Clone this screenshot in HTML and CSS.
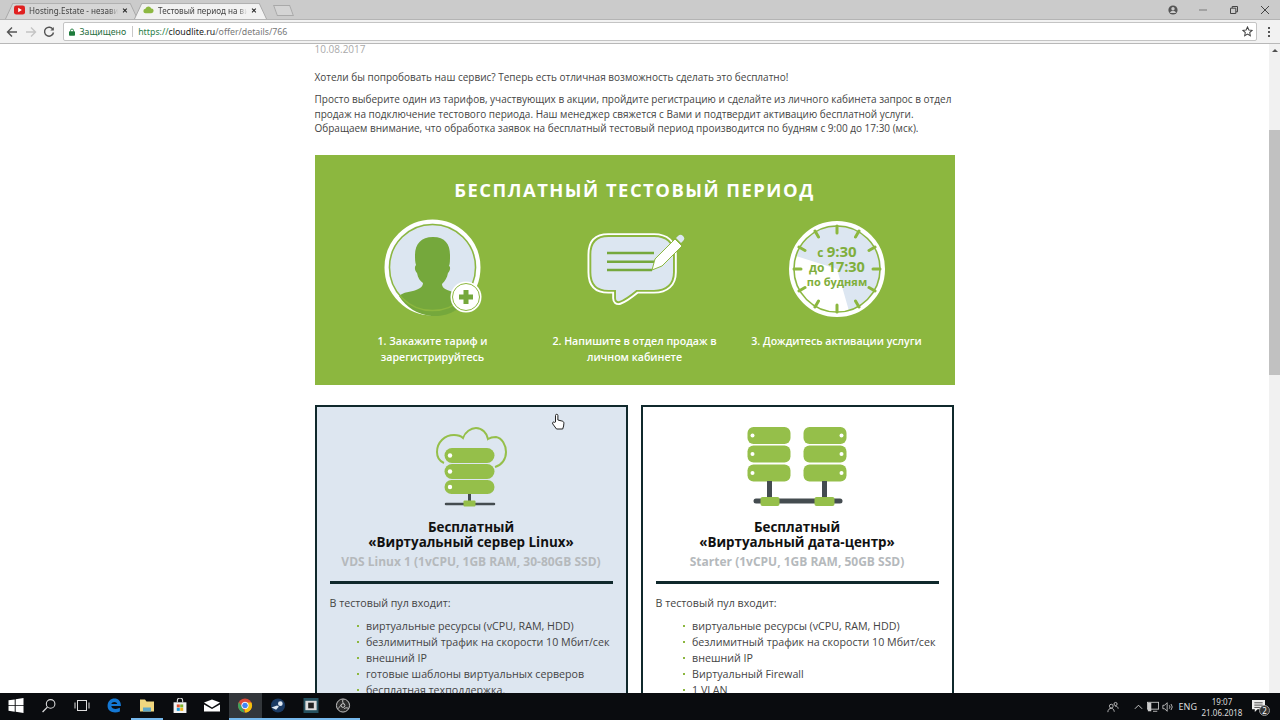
FILE: index.html
```html
<!DOCTYPE html>
<html lang="ru">
<head>
    <meta charset="UTF-8">
    <meta name="viewport" content="width=device-width, initial-scale=1.0">
    <title>Тестовый период на виртуальный сервер</title>
    <link rel="stylesheet" href="styles.css">
</head>
<body>
    <!-- Browser tab strip -->
    <div class="tabstrip">
        <div class="tab">
            <svg class="tab-icon" viewBox="0 0 12 10"><rect width="12" height="10" rx="2.5" fill="#e02020"/><path d="M4.6 2.6v4.8L8.6 5z" fill="#fff"/></svg>
            <span class="tab-title">Hosting.Estate - независ</span>
            <span class="tab-close">✕</span>
        </div>
        <div class="tab tab-active">
            <svg class="tab-icon" viewBox="0 0 12 10"><path d="M3 8.5a2.4 2.4 0 0 1-.4-4.8A3.4 3.4 0 0 1 9 3.3a2.6 2.6 0 0 1 0 5.2z" fill="#8db842"/></svg>
            <span class="tab-title">Тестовый период на вир</span>
            <span class="tab-close">✕</span>
        </div>
        <div class="tab-new"></div>
        <div class="window-controls">
            <svg class="win-user" viewBox="0 0 10 10"><circle cx="5" cy="5" r="4.6" fill="#555"/><circle cx="5" cy="3.8" r="1.7" fill="#ccc"/><path d="M1.8 8a3.4 3.4 0 0 1 6.4 0z" fill="#ccc"/></svg>
            <svg class="win-btn" viewBox="0 0 10 10"><path d="M1 5h8" stroke="#888" stroke-width="1.2"/></svg>
            <svg class="win-btn" viewBox="0 0 10 10"><path d="M1.5 3.2h5.3v5.3H1.5zM3.2 3V1.5h5.3v5.3H7" fill="none" stroke="#444" stroke-width="1"/></svg>
            <svg class="win-btn" viewBox="0 0 10 10"><path d="M1 1l8 8M9 1l-8 8" stroke="#444" stroke-width="1"/></svg>
        </div>
    </div>

    <!-- Address bar -->
    <div class="toolbar">
        <svg class="nav-icon" viewBox="0 0 12 12"><path d="M11 6H2M6 1.5L1.5 6 6 10.5" fill="none" stroke="#555" stroke-width="1.4"/></svg>
        <svg class="nav-icon" viewBox="0 0 12 12"><path d="M1 6h9M6 1.5L10.5 6 6 10.5" fill="none" stroke="#c4c4c4" stroke-width="1.4"/></svg>
        <svg class="nav-icon" viewBox="0 0 12 12"><path d="M10 3.5A4.5 4.5 0 1 0 10.5 6.5" fill="none" stroke="#555" stroke-width="1.4"/><path d="M10.8 1v3.4H7.4z" fill="#555"/></svg>
        <div class="omnibox">
            <svg class="lock" viewBox="0 0 8 10"><path d="M2 4.5V3a2 2 0 0 1 4 0v1.5" fill="none" stroke="#1e7b3c" stroke-width="1.2"/><rect y="4" width="8" height="6" rx="1" fill="#1e7b3c"/></svg>
            <span class="secure">Защищено</span>
            <span class="omni-sep"></span>
            <span class="url"><span class="url-https">https://</span><span class="url-host">cloudlite.ru</span>/offer/details/766</span>
            <svg class="star" viewBox="0 0 12 12"><path d="M6 1l1.5 3.3 3.5.4-2.6 2.4.7 3.5L6 8.9l-3.1 1.7.7-3.5L1 4.7l3.5-.4z" fill="none" stroke="#444" stroke-width="1.1"/></svg>
        </div>
        <div class="menu-dots"><i></i><i></i><i></i></div>
    </div>

    <div class="viewport">
        <div class="page">
            <div class="content">
                <p class="date">10.08.2017</p>
                <p class="text">Хотели бы попробовать наш сервис? Теперь есть отличная возможность сделать это бесплатно!</p>
                <p class="text">Просто выберите один из тарифов, участвующих в акции, пройдите регистрацию и сделайте из личного кабинета запрос в отдел продаж на подключение тестового периода. Наш менеджер свяжется с Вами и подтвердит активацию бесплатной услуги. Обращаем внимание, что обработка заявок на бесплатный тестовый период производится по будням с 9:00 до 17:30 (мск).</p>

                <!-- Green promo block -->
                <div class="promo">
                    <h2 class="promo-title">Бесплатный тестовый период</h2>
                    <div class="steps">
                        <div class="step">
                            <svg class="step-icon" viewBox="0 0 100 100">
                                <circle cx="49.5" cy="48.5" r="46" fill="#dce6f1" stroke="#fff" stroke-width="4"/>
                                <path d="M32 36C32 25 38 18 50 18C62 18 67 25 67 36C67 41 67 45 66 47C68 48 67 52 65 54C64 59 62 62 59 65C59 68 61 70 67 72C75 75 80 77 84 80L84 82A42 42 0 0 1 16 77C20 73 28 73 33 71C38 69 40 67 40 64C37 62 35 59 34 54C32 52 31 48 33 46C32 43 32 40 32 36Z" fill="#75a83c"/>
                                <circle cx="49.5" cy="48.5" r="43" fill="none" stroke="#8cb73f" stroke-width="1.5"/>
                                <circle cx="83" cy="78" r="15.5" fill="#fff"/>
                                <circle cx="83" cy="78" r="13.5" fill="none" stroke="#8cb73f" stroke-width="1"/>
                                <path d="M83 71v14M76 78h14" stroke="#75a83c" stroke-width="5"/>
                            </svg>
                            <p class="step-text">1. Закажите тариф и зарегистрируйтесь</p>
                        </div>
                        <div class="step">
                            <svg class="step-icon" viewBox="0 0 100 100">
                                <g transform="translate(2.5 3) scale(.95 .93)">
                                    <path class="bubble-outer" d="M22 15H70C83 15 91 22 91 35V54C91 67 83 74 70 74H52C46 79 40 84 34 86C31 87 29 85 29 82V74H22C9 74 3 67 3 54V35C3 22 9 15 22 15Z"/>
                                    <path class="bubble-inner" d="M22 15H70C83 15 91 22 91 35V54C91 67 83 74 70 74H52C46 79 40 84 34 86C31 87 29 85 29 82V74H22C9 74 3 67 3 54V35C3 22 9 15 22 15Z"/>
                                </g>
                                <path d="M22 34h47M22 42.7h47M22 51h45" stroke="#75a83c" stroke-width="2.5"/>
                                <path d="M67 51L70 40L90 20L97 27L77 47Z" fill="#fff" stroke="#8cb73f" stroke-width="1"/>
                                <path d="M91 19l2-2a3.5 3.5 0 0 1 5 5l-2 2z" fill="#dce6f1"/>
                            </svg>
                            <p class="step-text">2. Напишите в отдел продаж в личном кабинете</p>
                        </div>
                        <div class="step">
                            <svg class="step-icon" viewBox="0 0 100 100">
                                <circle cx="50" cy="50" r="46" fill="#dce6f1" stroke="#fff" stroke-width="4"/>
                                <path d="M50 50L9 37A43 43 0 0 0 62 92z" fill="#fff"/>
                                <circle cx="50" cy="50" r="43" fill="none" stroke="#8cb73f" stroke-width="1.5"/>
                                <path class="clock-ticks" d="M50 7v7M50 86v7M7 50h7M86 50h7M28 12l3.500 6M72 12l-3.500 6M28 88l3.500-6M72 88l-3.500-6M12 28l6 3.500M88 28l-6 3.500M12 72l6-3.500M88 72l-6-3.500"/>
                                <text class="clock-text" x="50" y="38" text-anchor="middle"><tspan font-size="12">с </tspan><tspan font-size="15">9:30</tspan></text>
                                <text class="clock-text" x="50" y="53" text-anchor="middle"><tspan font-size="12">до </tspan><tspan font-size="14.5">17:30</tspan></text>
                                <text class="clock-text" x="50" y="67" text-anchor="middle" font-size="11">по будням</text>
                            </svg>
                            <p class="step-text">3. Дождитесь активации услуги</p>
                        </div>
                    </div>
                </div>

                <!-- Offer cards -->
                <div class="cards">
                    <div class="card card-selected">
                        <svg class="card-icon" viewBox="0 0 100 80">
                            <path d="M23 36C18 34 16 29 16 25C16 15 24 8 33 8C37 8 40 9 42 11C44 5 50 1 55 1C61 1 66 6 67 12C70 10 73 10 75 10C81 11 85 18 85 25C85 32 81 38 74 40" fill="none" stroke="#95bf4a" stroke-width="2"/>
                            <rect x="23.5" y="21" width="50" height="15" rx="7.5" fill="#95bf4a"/>
                            <rect x="23.5" y="37" width="50" height="15" rx="7.5" fill="#95bf4a"/>
                            <rect x="23.5" y="53" width="50" height="14" rx="7" fill="#95bf4a"/>
                            <circle cx="29" cy="28.5" r="2.2" fill="#fff"/>
                            <circle cx="29" cy="44.5" r="2.2" fill="#fff"/>
                            <circle cx="29" cy="60" r="2.2" fill="#fff"/>
                            <path d="M48.5 67v9" stroke="#444c50" stroke-width="3"/>
                            <path d="M25 77h48" stroke="#444c50" stroke-width="2.5" stroke-linecap="round"/>
                            <rect x="42.5" y="73.5" width="12" height="6" rx="1" fill="#95bf4a"/>
                        </svg>
                        <h3 class="card-title">Бесплатный<br>«Виртуальный сервер Linux»</h3>
                        <p class="card-plan">VDS Linux 1 (1vCPU, 1GB RAM, 30-80GB SSD)</p>
                        <div class="card-rule"></div>
                        <p class="card-lead">В тестовый пул входит:</p>
                        <ul class="card-list">
                            <li>виртуальные ресурсы (vCPU, RAM, HDD)</li>
                            <li>безлимитный трафик на скорости 10 Мбит/сек</li>
                            <li>внешний IP</li>
                            <li>готовые шаблоны виртуальных серверов</li>
                            <li>бесплатная техподдержка.</li>
                        </ul>
                    </div>
                    <div class="card">
                        <svg class="card-icon" viewBox="0 0 100 80">
                            <rect x="0.5" y="0" width="43" height="17" rx="6" fill="#95bf4a"/>
                            <rect x="0.5" y="18.5" width="43" height="17" rx="6" fill="#95bf4a"/>
                            <rect x="0.5" y="37.5" width="43" height="17" rx="6" fill="#95bf4a"/>
                            <rect x="56.5" y="0" width="43" height="17" rx="6" fill="#95bf4a"/>
                            <rect x="56.5" y="18.5" width="43" height="17" rx="6" fill="#95bf4a"/>
                            <rect x="56.5" y="37.5" width="43" height="17" rx="6" fill="#95bf4a"/>
                            <circle cx="5.5" cy="8.5" r="2" fill="#fff"/><circle cx="5.5" cy="27" r="2" fill="#fff"/><circle cx="5.5" cy="46" r="2" fill="#fff"/>
                            <circle cx="94.5" cy="8.5" r="2" fill="#fff"/><circle cx="94.5" cy="27" r="2" fill="#fff"/><circle cx="94.5" cy="46" r="2" fill="#fff"/>
                            <path d="M22.5 54v16M77.5 54v16" stroke="#444c50" stroke-width="5"/>
                            <path d="M9 74h84" stroke="#444c50" stroke-width="5" stroke-linecap="round"/>
                            <rect x="13.5" y="70" width="19" height="9" rx="2" fill="#95bf4a"/>
                            <rect x="67.5" y="70" width="20" height="9" rx="2" fill="#95bf4a"/>
                        </svg>
                        <h3 class="card-title">Бесплатный<br>«Виртуальный дата-центр»</h3>
                        <p class="card-plan">Starter (1vCPU, 1GB RAM, 50GB SSD)</p>
                        <div class="card-rule"></div>
                        <p class="card-lead">В тестовый пул входит:</p>
                        <ul class="card-list">
                            <li>виртуальные ресурсы (vCPU, RAM, HDD)</li>
                            <li>безлимитный трафик на скорости 10 Мбит/сек</li>
                            <li>внешний IP</li>
                            <li>Виртуальный Firewall</li>
                            <li>1 VLAN</li>
                        </ul>
                    </div>
                </div>
            </div>

            <!-- Mouse pointer -->
            <svg class="cursor" viewBox="0 0 14 18"><path d="M4.5 9V2.5a1.2 1.2 0 0 1 2.4 0V7l4 1c1.3.3 2 1 2 2.2 0 2-.4 3.5-1.2 5.8H5.5L1.8 11c-1-1.3.6-2.7 1.7-1.600z" fill="#fff" stroke="#222" stroke-width="1"/></svg>
        </div>
        <div class="scrollbar">
            <span class="scroll-arrow"></span>
            <div class="scroll-thumb"></div>
        </div>
    </div>

    <!-- Windows taskbar -->
    <div class="taskbar">
        <div class="task-item"><svg class="task-icon" viewBox="0 0 14 14"><path d="M0 2.2L5.8 1.3V6.7H0zM6.7 1.2L14 0V6.7H6.7zM0 7.5H5.8V12.800L0 12zM6.700 7.500H14V14L6.700 12.900z" fill="#fff"/></svg></div>
        <div class="task-item"><svg class="task-icon" viewBox="0 0 14 14"><circle cx="8.5" cy="5.5" r="4" fill="none" stroke="#ddd" stroke-width="1"/><path d="M5.5 8.5L1 13" stroke="#ddd" stroke-width="1.2"/></svg></div>
        <div class="task-item"><svg class="task-icon" viewBox="0 0 16 14"><rect x="3.5" y="2" width="9" height="10" fill="none" stroke="#ddd"/><path d="M1 4v6M15 4v6" stroke="#ddd"/></svg></div>
        <div class="task-item"><svg class="task-icon" viewBox="0 0 14 14"><path d="M1 7.5C1 3 4 .5 7.5.5 11 .5 13.5 3 13.5 7.5H4.5c.2 2.8 4.5 3.7 8 1.7v3.3c-5 2.2-11.5.7-11.5-5zM4.5 5.5h5.5C9.8 3 5 3 4.5 5.5z" fill="#1478d4"/></svg></div>
        <div class="task-item task-open"><svg class="task-icon" viewBox="0 0 16 14"><path d="M1 1h5l1.5 2H15v10H1z" fill="#f0d77f"/><rect x="4" y="9" width="8" height="4" fill="#5fa8c8"/></svg></div>
        <div class="task-item"><svg class="task-icon" viewBox="0 0 14 14"><path d="M4.5 4V2.5a2.5 2.5 0 0 1 5 0V4" fill="none" stroke="#ddd"/><rect x="1" y="4" width="12" height="10" fill="#f2f2f2"/><rect x="4" y="6" width="2.8" height="2.8" fill="#e3502a"/><rect x="7.2" y="6" width="2.8" height="2.8" fill="#7db52a"/><rect x="4" y="9.2" width="2.8" height="2.8" fill="#1d9bd8"/><rect x="7.2" y="9.2" width="2.8" height="2.8" fill="#f0b41c"/></svg></div>
        <div class="task-item"><svg class="task-icon" viewBox="0 0 16 12"><path d="M0 3L8 0l8 3-8 5z" fill="#fff"/><path d="M0 5l8 4.5L16 5v7H0z" fill="#fff"/></svg></div>
        <div class="task-item task-open task-active"><svg class="task-icon" viewBox="0 0 16 16"><circle cx="8" cy="8" r="7.5" fill="#dd4b39"/><path d="M8 15.5A7.5 7.5 0 0 0 14.8 4.8H8z" fill="#f4c20d"/><path d="M8 15.5A7.5 7.5 0 0 1 1.5 4.3L5 10.5z" fill="#3ba55d"/><circle cx="8" cy="8" r="3.5" fill="#4285f4" stroke="#fff"/></svg></div>
        <div class="task-item task-open"><svg class="task-icon" viewBox="0 0 16 16"><circle cx="8" cy="8" r="7.5" fill="#1a3a63"/><circle cx="10.5" cy="6" r="2.5" fill="#dfe8f2"/><path d="M1 10l5 2.5 3-3.5-2-1z" fill="#dfe8f2"/></svg></div>
        <div class="task-item task-open"><svg class="task-icon" viewBox="0 0 16 16"><rect width="16" height="16" fill="#25505f"/><rect x="2" y="3" width="12" height="10" fill="#ddd"/><rect x="5" y="5" width="6" height="6" fill="#222"/></svg></div>
        <div class="task-item task-open"><svg class="task-icon" viewBox="0 0 16 16"><circle cx="8" cy="8" r="7" fill="#2b2b2b" stroke="#ccc"/><circle cx="8" cy="8" r="2" fill="none" stroke="#ccc"/><path d="M8 1.5c-1 2.5 0 4 1.5 5M14 11c-2.5-1-4-.5-5 .8M2.5 11.5c2-1.8 2.5-3 3.500-4.500" fill="none" stroke="#ccc"/></svg></div>

        <div class="tray">
            <svg class="tray-icon tray-people" viewBox="0 0 14 14"><circle cx="5" cy="6" r="2.2" fill="none" stroke="#ccc"/><circle cx="10" cy="3.5" r="1.8" fill="none" stroke="#ccc"/><path d="M1 13c0-3 2-4.5 4-4.5s3 1.5 3.5 4M9.5 6c2 0 3.5 1 3.5 3" fill="none" stroke="#ccc"/></svg>
            <svg class="tray-chevron" viewBox="0 0 10 6"><path d="M1 5l4-4 4 4" fill="none" stroke="#ddd"/></svg>
            <svg class="tray-icon" viewBox="0 0 14 14"><rect x=".5" y="1.5" width="13" height="8" fill="none" stroke="#ccc"/><rect x="1" y="2" width="4" height="10" fill="#ccc"/><path d="M7 12h5" stroke="#ccc"/></svg>
            <svg class="tray-icon tray-sound" viewBox="0 0 14 14"><path d="M1 5h2l3-3v10L3 9H1z" fill="none" stroke="#ccc"/><path d="M8.5 5a3 3 0 0 1 0 4M10.5 3.5a5.5 5.5 0 0 1 0 7" fill="none" stroke="#ccc"/></svg>
            <span class="tray-lang">ENG</span>
            <div class="tray-clock"><span>19:07</span><span>21.06.2018</span></div>
            <div class="tray-notify">
                <svg class="tray-note" viewBox="0 0 14 14"><path d="M0 0h14v10H6l-3 3v-3H0z" fill="#eee"/><path d="M2.5 3h9M2.5 5.5h9M2.5 8h6" stroke="#444"/></svg>
                <span class="tray-badge">2</span>
            </div>
        </div>
    </div>
</body>
</html>
```

FILE: styles.css
```css
* {
    box-sizing: border-box;
}
body {
    margin: 0;
    width: 1280px;
    height: 720px;
    display: flex;
    flex-direction: column;
    overflow: hidden;
    background-color: #fff;
    font-family: "Open Sans", sans-serif;
}
p, h2, h3, ul {
    margin: 0;
    padding: 0;
}

/* Tab strip */
.tabstrip {
    height: 19px;
    flex: none;
    display: flex;
    align-items: flex-end;
    padding-left: 9px;
    background-color: #cbcbcb;
    font-family: "Noto Sans", sans-serif;
}
.tab {
    position: relative;
    width: 125px;
    height: 18px;
    margin-right: 4px;
    display: flex;
    align-items: center;
    padding: 0 3px 0 5px;
    font-size: 8.1px;
    color: #444;
    z-index: 0;
}
.tab::before {
    content: "";
    position: absolute;
    inset: 0 -4px 0 -4px;
    background-color: #d6d6d6;
    border: 1px solid #a9a9a9;
    border-bottom: none;
    transform: perspective(30px) rotateX(12deg);
    transform-origin: bottom;
    z-index: -1;
}
.tab-active::before {
    background-color: #f2f2f2;
}
.tab-icon {
    width: 11px;
    height: 10px;
    flex: none;
    margin-right: 4px;
}
.tab-title {
    flex: 1;
    min-width: 0;
    overflow: hidden;
    white-space: nowrap;
    -webkit-mask-image: linear-gradient(to right, #000 90%, transparent);
    mask-image: linear-gradient(to right, #000 90%, transparent);
}
.tab-close {
    flex: none;
    width: 9px;
    margin-left: 4px;
    font-size: 7px;
    font-weight: 700;
    color: #222;
}
.tab-new {
    width: 17px;
    height: 11px;
    margin: 0 0 3px 8px;
    background-color: #d4d4d4;
    border: 1px solid #a9a9a9;
    transform: skewX(20deg);
}
.window-controls {
    margin-left: auto;
    height: 19px;
    display: flex;
    align-items: center;
}
.win-user {
    width: 10px;
    height: 10px;
    margin-right: 20px;
}
.win-btn {
    width: 10px;
    height: 10px;
    margin-right: 21px;
}
.win-btn:last-child {
    margin-right: 10px;
}

/* Address bar */
.toolbar {
    height: 25px;
    flex: none;
    display: flex;
    align-items: center;
    padding-left: 6px;
    background-color: #f2f2f2;
    border-top: 1px solid #b4b4b4;
    border-bottom: 1px solid #b8b8b8;
    font-family: "Noto Sans", sans-serif;
}
.nav-icon {
    width: 12px;
    height: 12px;
    margin-right: 6.5px;
}
.omnibox {
    width: 1194px;
    height: 19px;
    margin-left: 1px;
    display: flex;
    align-items: center;
    padding: 0 3px 0 5px;
    background-color: #fff;
    border: 1px solid #c4c4c4;
    border-radius: 2px;
    font-size: 8.8px;
}
.lock {
    width: 6px;
    height: 8px;
    margin-right: 5px;
}
.secure {
    color: #2a6f3f;
}
.omni-sep {
    width: 1px;
    height: 11px;
    margin: 0 5.5px;
    background-color: #c8c8c8;
}
.url {
    color: #777;
}
.url-https {
    color: #2a7f4a;
}
.url-host {
    color: #222;
}
.star {
    width: 11px;
    height: 11px;
    margin-left: auto;
}
.menu-dots {
    margin-left: 11px;
    display: flex;
    flex-direction: column;
    gap: 2px;
}
.menu-dots i {
    width: 2px;
    height: 2px;
    background-color: #555;
}

/* Page area */
.viewport {
    flex: 1;
    min-height: 0;
    display: flex;
}
.page {
    position: relative;
    flex: 1;
    overflow: hidden;
}
.content {
    width: 640px;
    margin: -2px auto 0;
    font-size: 10px;
    line-height: 14.5px;
    color: #444;
}
.date {
    color: #aaa;
    margin-bottom: 13.5px;
}
.text {
    margin-bottom: 7.5px;
}
.promo {
    height: 230px;
    margin-top: 19.5px;
    padding: 22px 17px 0;
    background-color: #8cb73f;
    color: #fff;
}
.promo-title {
    font-size: 18.4px;
    line-height: 26px;
    font-weight: 700;
    letter-spacing: 1.5px;
    text-align: center;
    text-transform: uppercase;
}
.steps {
    display: grid;
    grid-template-columns: repeat(3, 202px);
    margin-top: 16px;
}
.step {
    display: flex;
    flex-direction: column;
    align-items: center;
    text-align: center;
}
.step-icon {
    width: 100px;
    height: 100px;
}
.step-text {
    width: 180px;
    margin-top: 14px;
    font-size: 10.6px;
    line-height: 16px;
    font-weight: 600;
}
.bubble-outer {
    fill: none;
    stroke: #fff;
    stroke-width: 6;
}
.bubble-inner {
    fill: #dce6f1;
    stroke: #8cb73f;
    stroke-width: 2;
}
.clock-ticks {
    stroke: #8cb73f;
    stroke-width: 3;
    stroke-linecap: round;
}
.clock-text {
    font-family: "Open Sans", sans-serif;
    font-weight: 700;
    fill: #7fae3c;
}

/* Offer cards */
.cards {
    display: grid;
    grid-template-columns: 313px 313px;
    gap: 13px;
    margin-top: 20px;
}
.card {
    height: 320px;
    padding: 20px 13px 0;
    border: 2px solid #10292c;
}
.card-selected {
    background-color: #dde6f0;
}
.card-icon {
    display: block;
    width: 100px;
    height: 80px;
    margin: 0 auto;
}
.card-title {
    margin-top: 13px;
    font-size: 13.4px;
    line-height: 15px;
    font-weight: 700;
    color: #111;
    text-align: center;
}
.card-plan {
    margin-top: 4px;
    font-size: 12px;
    line-height: 16px;
    font-weight: 700;
    color: #b5b9bc;
    text-align: center;
}
.card-rule {
    height: 3px;
    margin-top: 11px;
    background-color: #10292c;
}
.card-lead {
    margin-top: 12px;
    font-size: 10.7px;
}
.card-list {
    margin-top: 7px;
    padding-left: 36.5px;
    list-style: none;
    font-size: 10.7px;
}
.card-list li {
    position: relative;
    line-height: 16px;
    white-space: nowrap;
}
.card-list li::before {
    content: "";
    position: absolute;
    left: -9px;
    top: 7px;
    width: 2px;
    height: 2px;
    background-color: #8cb73f;
}
.cursor {
    position: absolute;
    left: 551px;
    top: 369px;
    width: 14px;
    height: 18px;
}

/* Scrollbar */
.scrollbar {
    position: relative;
    width: 11px;
    flex: none;
    background-color: #f1f1f1;
}
.scroll-arrow {
    position: absolute;
    left: 3px;
    top: 5px;
    border-left: 3px solid transparent;
    border-right: 3px solid transparent;
    border-bottom: 3px solid #505050;
}
.scroll-thumb {
    position: absolute;
    left: 0;
    top: 86px;
    width: 11px;
    height: 245px;
    background-color: #c1c1c1;
}

/* Taskbar */
.taskbar {
    height: 27px;
    flex: none;
    display: flex;
    align-items: stretch;
    background-color: #0a0c0f;
    color: #ddd;
    font-family: "Noto Sans", sans-serif;
}
.task-item {
    width: 32.7px;
    display: flex;
    align-items: center;
    justify-content: center;
    border-bottom: 2px solid transparent;
}
.task-open {
    border-bottom-color: #76b9ed;
    background-clip: padding-box;
}
.task-active {
    background-color: #33373b;
}
.task-icon {
    width: 16px;
    height: 15px;
}
.tray {
    margin-left: auto;
    display: flex;
    align-items: center;
    font-size: 9px;
}
.tray-icon {
    width: 12px;
    height: 12px;
    margin-right: 3px;
}
.tray-people {
    margin-right: 15px;
}
.tray-sound {
    margin-right: 5px;
}
.tray-chevron {
    width: 9px;
    height: 6px;
    margin-right: 4px;
}
.tray-clock {
    width: 50px;
    margin-right: 1px;
    display: flex;
    flex-direction: column;
    align-items: center;
    line-height: 11px;
    font-size: 8px;
}
.tray-notify {
    position: relative;
    width: 32px;
    height: 20px;
    padding-left: 4px;
    padding-top: 3px;
}
.tray-note {
    display: block;
    width: 13px;
    height: 13px;
}
.tray-badge {
    position: absolute;
    left: 11px;
    top: 8px;
    width: 11px;
    height: 11px;
    border-radius: 50%;
    background-color: #333;
    border: 1px solid #999;
    font-size: 8px;
    line-height: 9px;
    text-align: center;
    color: #fff;
}
```
